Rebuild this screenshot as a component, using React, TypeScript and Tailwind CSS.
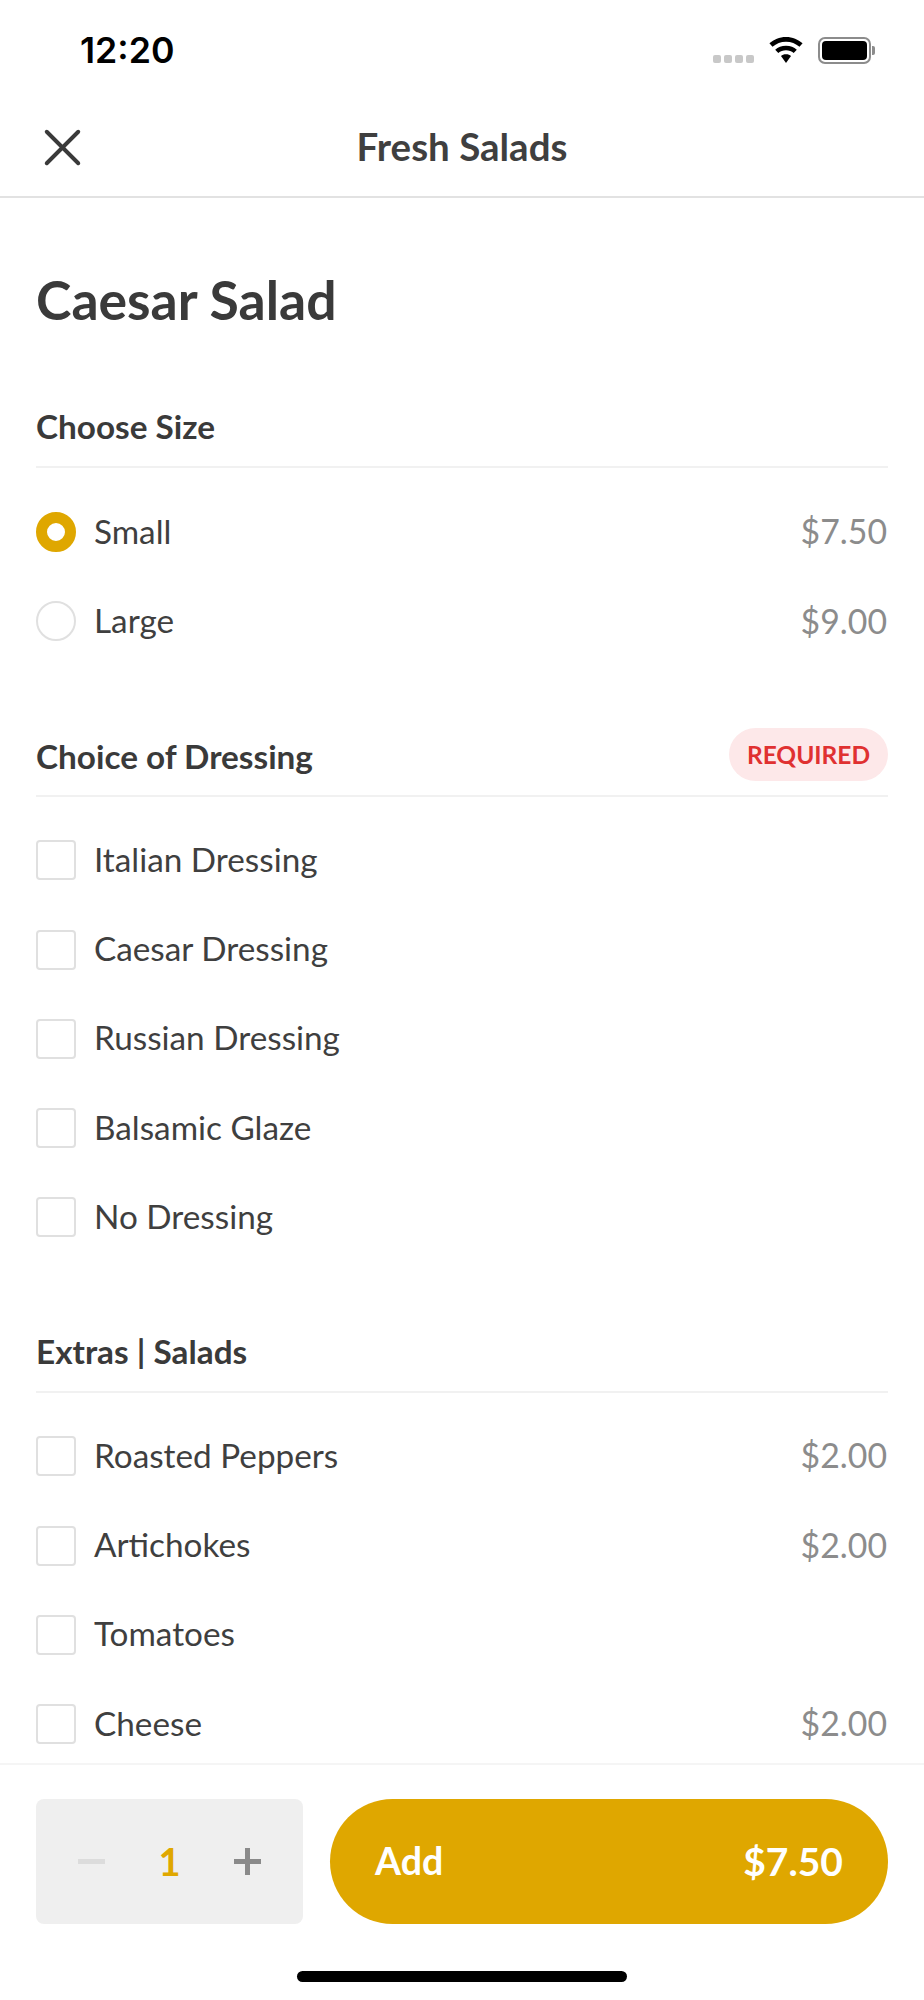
import { X } from "lucide-react";

const dressings = ["Italian Dressing", "Caesar Dressing", "Russian Dressing", "Balsamic Glaze", "No Dressing"];
const extras = [
  { name: "Roasted Peppers", price: "$2.00" },
  { name: "Artichokes", price: "$2.00" },
  { name: "Tomatoes", price: "" },
  { name: "Cheese", price: "$2.00" },
];

function Row({ mark, label, price }: { mark: React.ReactNode; label: string; price?: string }) {
  return (
    <div className="flex h-[89.3px] items-center">
      {mark}
      <span className="ml-[18px] pb-[1px] text-[33.3px] text-[#3f3f3f]">{label}</span>
      {price && <span className="ml-auto pb-[1px] pr-[1px] text-[33.8px] text-[#8c8c8c]">{price}</span>}
    </div>
  );
}

const Checkbox = () => <div className="h-10 w-10 rounded-[4px] border-2 border-[#e0e0e0]" />;

function SectionHead({ title, badge }: { title: string; badge?: string }) {
  return (
    <div className="flex h-[80px] items-center justify-between border-b-2 border-[#f1f1f1]">
      <h2 className={badge ? "mt-[2px] text-[33.3px] font-bold text-[#3a3a3a]" : "text-[33.3px] font-bold text-[#3a3a3a]"}>{title}</h2>
      {badge && (
        <span className="mb-[2px] flex h-[53px] w-[159px] items-center justify-center rounded-full bg-[#fde8e9] pt-[1px] text-[24.5px] font-bold text-[#e03131]">
          {badge}
        </span>
      )}
    </div>
  );
}

export default function App() {
  return (
    <div className="flex h-[2000px] w-[924px] flex-col overflow-hidden bg-white font-['Lato',sans-serif]">
      {/* Status bar */}
      <div className="relative flex h-[100px] shrink-0 items-center justify-between pl-[80px] pr-[49px]">
        <span className="pt-[1px] font-['Inter',sans-serif] text-[35.7px] font-semibold text-black">12:20</span>
        <div className="flex items-center">
          <div className="mt-[18px] flex gap-[3px]">
            <div className="h-[8px] w-[8px] rounded-[2px] bg-[#c8c8c8]" />
            <div className="h-[8px] w-[8px] rounded-[2px] bg-[#c8c8c8]" />
            <div className="h-[8px] w-[8px] rounded-[2px] bg-[#c8c8c8]" />
            <div className="h-[8px] w-[8px] rounded-[2px] bg-[#c8c8c8]" />
          </div>
          <svg className="ml-[13px]" width="38" height="27" viewBox="0 0 36 28">
            <path d="M18 0C11 0 5.500 2.600 0.800 6.600L4 10.200C8 6.900 12.600 5 18 5s10 1.900 14 5.200l3.200-3.600C30.500 2.600 25 0 18 0z" fill="#000" />
            <path d="M18 9c-4.600 0-8.300 1.600-11.200 4.100L10 16.700c2.300-1.900 4.800-2.900 8-2.900s5.700 1 8 2.900l3.200-3.600C26.300 10.600 22.600 9 18 9z" fill="#000" />
            <path d="M18 18c-2.300 0-3.900.7-5.200 1.800L18 27l5.200-7.200C21.900 18.700 20.300 18 18 18z" fill="#000" />
          </svg>
          <div className="ml-[13px] flex h-[27px] w-[53px] items-center rounded-[7px] border-2 border-[#8c8c8c] p-[2px]">
            <div className="h-full w-full rounded-[4px] bg-black" />
          </div>
          <div className="ml-[1px] h-[9px] w-[3px] rounded-r-[2px] bg-[#8c8c8c]" />
        </div>
      </div>

      {/* Header */}
      <div className="relative flex h-[98px] shrink-0 items-center justify-center border-b-2 border-[#e2e2e2] pb-[3px]">
        <X className="absolute left-[31px] top-[16px] text-[#3a3a3a]" size={63} strokeWidth={1.5} />
        <span className="text-[38.5px] font-bold text-[#3f3f3f]">Fresh Salads</span>
      </div>

      {/* Scrollable content */}
      <div className="min-h-0 flex-1 overflow-hidden px-9">
        <h1 className="mt-[66px] text-[53.5px] leading-[70px] font-bold text-[#3a3a3a]">Caesar Salad</h1>

        <div className="mt-[54px]">
          <SectionHead title="Choose Size" />
          <div className="mt-[19.5px]">
            <Row
              mark={<div className="h-10 w-10 rounded-full border-[11px] border-[#dfa700]" />}
              label="Small"
              price="$7.50"
            />
            <Row mark={<div className="h-10 w-10 rounded-full border-2 border-[#e0e0e0]" />} label="Large" price="$9.00" />
          </div>
        </div>

        <div className="mt-[50.5px]">
          <SectionHead title="Choice of Dressing" badge="REQUIRED" />
          <div className="mt-[19px]">
            {dressings.map((d) => (
              <Row key={d} mark={<Checkbox />} label={d} />
            ))}
          </div>
        </div>

        <div className="mt-[51px]">
          <SectionHead title="Extras | Salads" />
          <div className="mt-[18.5px]">
            {extras.map((e) => (
              <Row key={e.name} mark={<Checkbox />} label={e.name} price={e.price} />
            ))}
          </div>
        </div>
      </div>

      {/* Bottom bar */}
      <div className="relative h-[237px] shrink-0 border-t-2 border-[#f5f5f5] bg-white px-9 pt-[34px]">
        <div className="flex gap-[27px]">
          <div className="flex h-[125px] w-[267px] items-center justify-between rounded-[8px] bg-[#efefef] px-[42px]">
            <div className="h-[5px] w-[27px] bg-[#dcdcdc]" />
            <span className="text-[38px] font-bold text-[#dfa700]">1</span>
            <div className="relative h-[27px] w-[27px]">
              <div className="absolute left-0 top-[11px] h-[5px] w-[27px] bg-[#8a8a8a]" />
              <div className="absolute left-[11px] top-0 h-[27px] w-[5px] bg-[#8a8a8a]" />
            </div>
          </div>
          <div className="flex h-[125px] flex-1 items-center justify-between rounded-full bg-[#dfa700] px-[45px] font-bold text-white">
            <span className="text-[37.5px]">Add</span>
            <span className="text-[39px]">$7.50</span>
          </div>
        </div>
        <div className="absolute bottom-[18px] left-[297px] h-[11px] w-[330px] rounded-full bg-black" />
      </div>
    </div>
  );
}
